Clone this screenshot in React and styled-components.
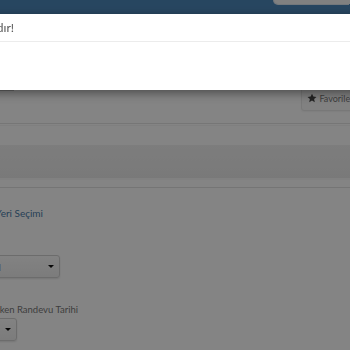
import React from "react";
import styled, { createGlobalStyle } from "styled-components";

const Global = createGlobalStyle`
  html, body { margin: 0; padding: 0; width: 350px; height: 350px; overflow: hidden; background: #fff; }
  body { font-family: Lato, "Open Sans", "Liberation Sans", sans-serif; }
`;

const Page = styled.div`
  width: 350px;
  height: 350px;
  background: #fefefe;
  display: flex;
  flex-direction: column;
  overflow: hidden;
`;

const Navbar = styled.header`
  height: 14px;
  flex: none;
  background: #4c86b9;
  display: flex;
  justify-content: flex-end;
  align-items: flex-start;
`;

const Search = styled.div`
  width: 76px;
  height: 24px;
  margin-top: -20px;
  background: #f8f8f8;
  border-radius: 0 0 0 5px;
  box-shadow: -1px 1px 0 #dfe6ee;
`;

const TopBar = styled.div`
  height: 110px;
  flex: none;
  display: flex;
  justify-content: space-between;
  align-items: flex-end;
  border-bottom: 1px solid #e2e2e2;
  box-sizing: border-box;
`;

const BackButton = styled.div`
  width: 14px;
  height: 22px;
  margin-bottom: 32px;
  border-bottom: 2px solid #c6c6c6;
  background: #f4f4f4;
`;

const FavButton = styled.div`
  height: 24px;
  margin-bottom: 12px;
  margin-right: -22px;
  padding: 0 8px 0 5px;
  display: flex;
  align-items: center;
  gap: 2px;
  background: #f7f7f7;
  border: 1px solid #e6e6e6;
  border-radius: 3px;
  box-shadow: 0 1px 2px rgba(0,0,0,0.06);
  font-size: 9px;
  color: #777;
  white-space: nowrap;
`;

const Section = styled.div`
  flex: none;
  padding-top: 19px;
  border-top: 1px solid #f3f3f3;
  margin-top: 1px;
`;

const Band = styled.div`
  height: 33px;
  background: linear-gradient(#efefef, #e9e9e9);
  border-bottom: 2px solid #f7f7f7;
`;

const Divider = styled.div`
  margin-top: 7px;
  height: 1px;
  background: #e0e0e0;
`;

const Form = styled.div`
  flex: none;
  display: flex;
  flex-direction: column;
  padding-top: 18px;
`;

const Clip = styled.div`
  width: ${(p) => p.$end}px;
  margin-top: ${(p) => p.$top || 0}px;
  display: flex;
  justify-content: flex-end;
  white-space: nowrap;
`;

const SectionTitle = styled.div`
  font-size: 10px;
  line-height: 14px;
  color: #4a7aa6;
`;

const Label = styled.div`
  font-size: 9.5px;
  line-height: 14px;
  color: #777;
`;

const Select = styled.div`
  margin-left: ${(p) => p.$left}px;
  width: ${(p) => p.$width}px;
  height: 23px;
  box-sizing: border-box;
  margin-top: ${(p) => p.$top}px;
  border: 1px solid #cfcfcf;
  border-radius: 3px;
  background: linear-gradient(#fafafa, #ededed);
  box-shadow: 0 1px 2px rgba(0,0,0,0.12);
  display: flex;
  align-items: center;
  justify-content: space-between;
  padding: 0 5px 0 14px;
  font-size: 10px;
  color: #666;
`;

const Caret = styled.span`
  width: 0;
  height: 0;
  border-left: 3px solid transparent;
  border-right: 3px solid transparent;
  border-top: 3px solid #111;
`;

const Backdrop = styled.div`
  position: fixed;
  inset: 0;
  background: rgba(0, 0, 0, 0.48);
`;

const Modal = styled.div`
  position: fixed;
  top: 14px;
  left: -300px;
  right: -30px;
  height: 76px;
  background: #fff;
  box-shadow: 0 3px 10px rgba(0, 0, 0, 0.45);
  display: flex;
  flex-direction: column;
`;

const ModalHeader = styled.div`
  height: 28px;
  flex: none;
  box-sizing: border-box;
  border-bottom: 1px solid #ececec;
  display: flex;
  align-items: center;
  padding-left: 300px;
`;

const ModalTitle = styled.div`
  font-size: 12px;
  color: #555;
`;

const Star = () => (
  <svg width="10" height="10" viewBox="0 0 24 24" fill="#444">
    <path d="M12 1.5l3.2 7 7.6.8-5.7 5.1 1.6 7.5L12 18l-6.7 3.9 1.6-7.5L1.2 9.3l7.6-.8z" />
  </svg>
);

export default function App() {
  return (
    <>
      <Global />
      <Page>
        <Navbar>
          <Search />
        </Navbar>
        <TopBar>
          <BackButton />
          <FavButton>
            <Star />
            Favorilerim
          </FavButton>
        </TopBar>
        <Section>
          <Band />
          <Divider />
        </Section>
        <Form>
          <Clip $end={43}>
            <SectionTitle>Hizmet Yeri Seçimi</SectionTitle>
          </Clip>
          <Select $left={-40} $width={100} $top={35}>
            <span>Genel</span>
            <Caret />
          </Select>
          <Clip $end={78} $top={25}>
            <Label>En Erken Randevu Tarihi</Label>
          </Clip>
          <Select $left={-60} $width={77} $top={1}>
            <span>Tümü</span>
            <Caret />
          </Select>
        </Form>
      </Page>
      <Backdrop />
      <Modal>
        <ModalHeader>
          <Clip $end={14}>
            <ModalTitle>Lütfen bir hizmet yeri seçiniz, bu alan zorunlu alandır!</ModalTitle>
          </Clip>
        </ModalHeader>
      </Modal>
    </>
  );
}
